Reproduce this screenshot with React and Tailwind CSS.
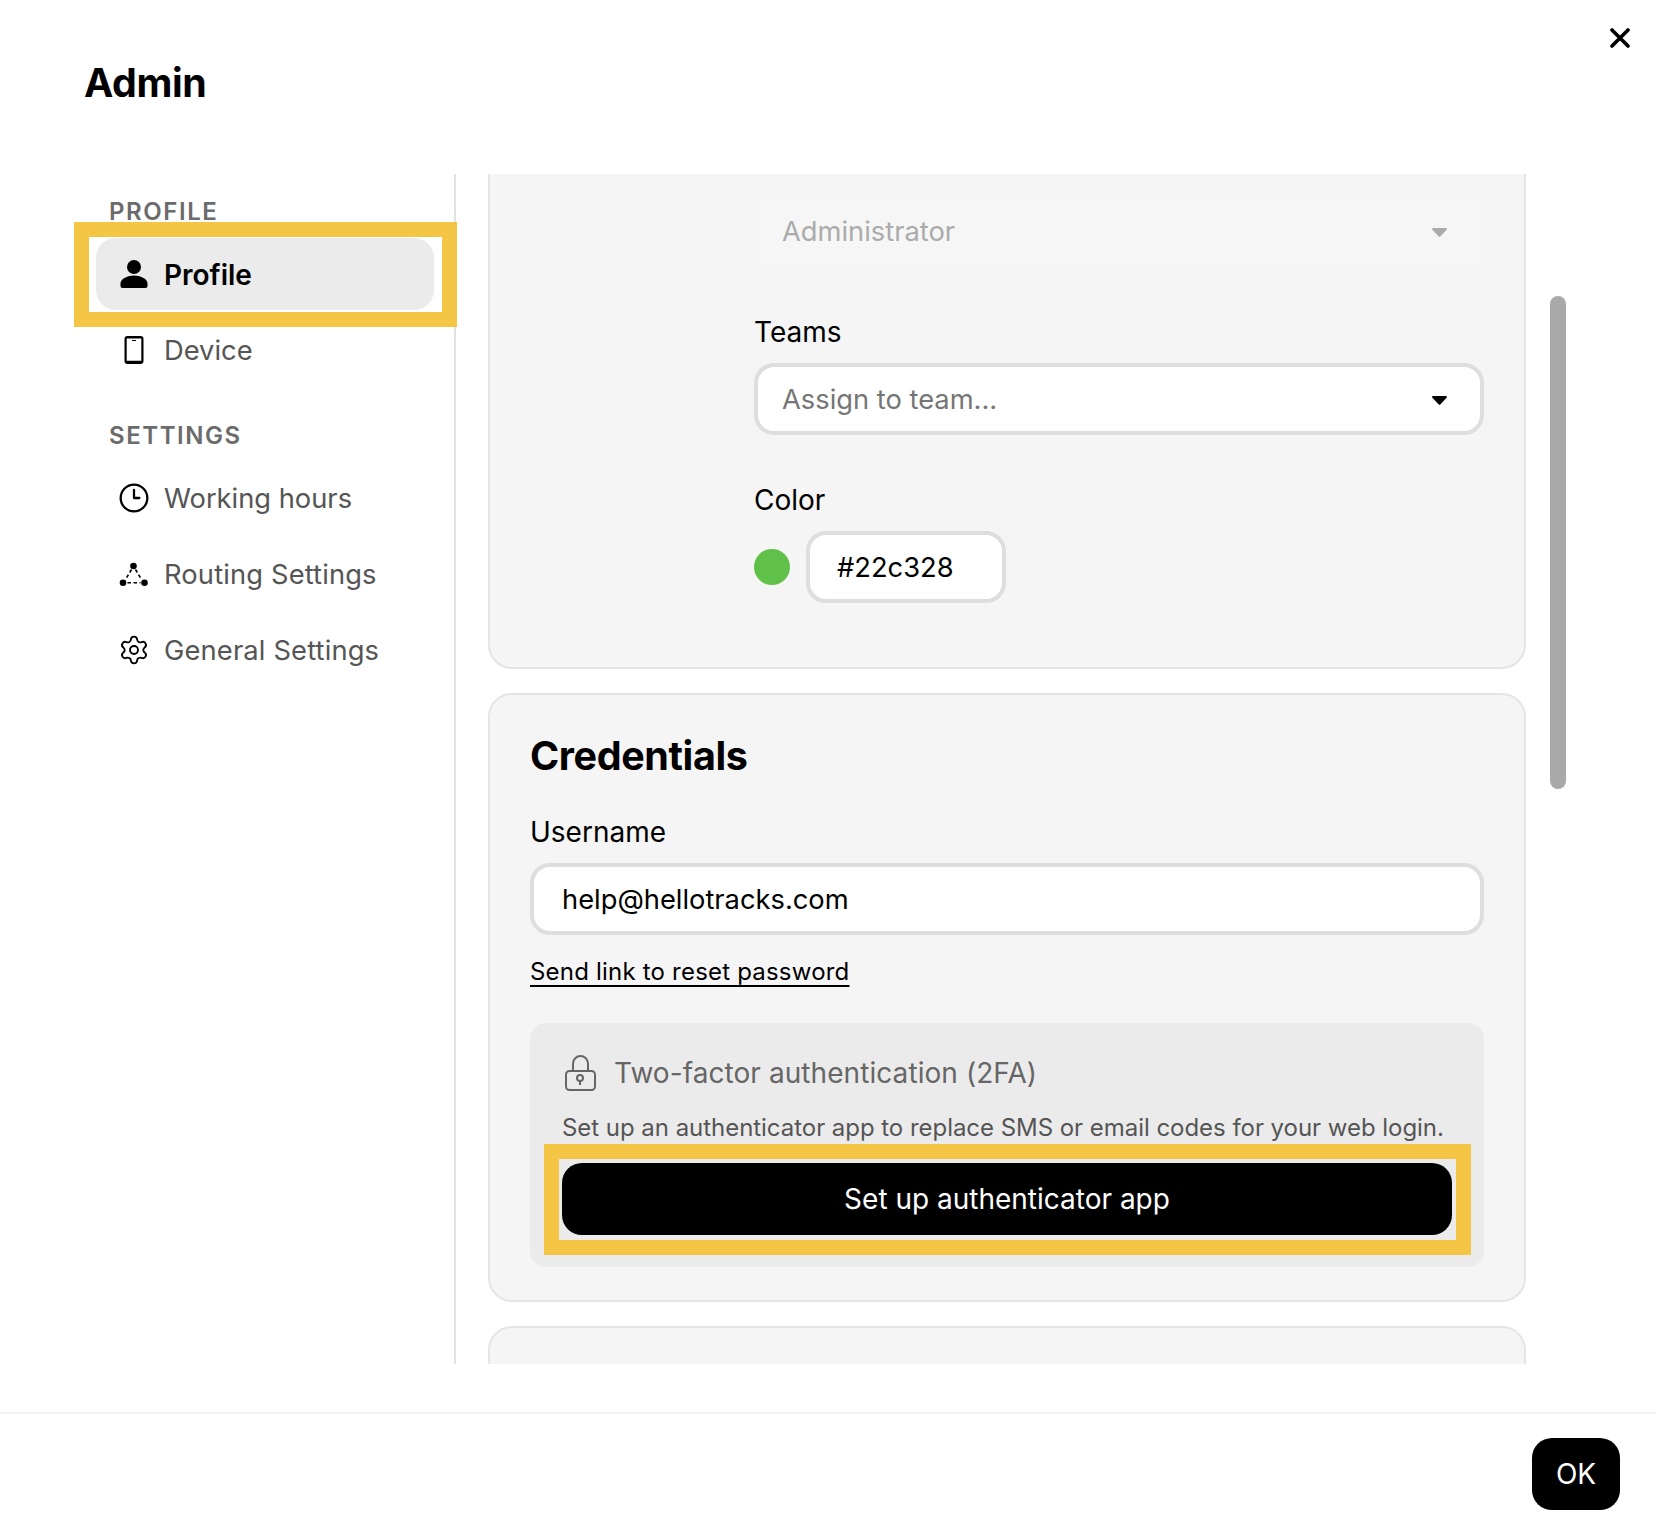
import { Clock3, Settings } from "lucide-react";

const font = { fontFamily: "Inter, 'Noto Sans', sans-serif" };

const PersonIcon = () => (
	<svg width="32" height="32" viewBox="0 0 32 32" fill="currentColor">
		<circle cx="16" cy="9" r="7" />
		<path d="M2.500 25.500c0-5 7.500-8 13.500-8s13.500 3 13.500 8v2.500c0 1.200-.8 2-2 2h-23c-1.200 0-2-.8-2-2z" />
	</svg>
);

const DeviceIcon = () => (
	<svg width="32" height="32" viewBox="0 0 32 32" fill="currentColor">
		<path
			fillRule="evenodd"
			d="M9.500 2h13a3 3 0 0 1 3 3v22a3 3 0 0 1-3 3h-13a3 3 0 0 1-3-3V5a3 3 0 0 1 3-3zM8.700 4.500v22.300h14.600V4.500z"
		/>
		<rect x="14" y="6" width="4" height="1" />
	</svg>
);

const RoutingIcon = () => (
	<svg width="32" height="32" viewBox="0 0 32 32" fill="currentColor">
		<circle cx="15.500" cy="8" r="3.300" />
		<circle cx="5" cy="24.700" r="3.300" />
		<circle cx="26.500" cy="24.700" r="3.300" />
		<path d="M13.500 11.500l-6 10M17.500 11.500l6 10M9.500 24.700h13" stroke="currentColor" strokeWidth="1.600" strokeDasharray="3.500 2.500" fill="none" />
	</svg>
);

const LockIcon = () => (
	<svg width="32" height="36" viewBox="0 0 32 36" fill="none" stroke="#666" strokeWidth="2">
		<path d="M9 16V8.500a7.500 7.500 0 0 1 15 0V16" />
		<rect x="2" y="16" width="29" height="19" rx="3.500" />
		<circle cx="16" cy="23" r="3" />
		<path d="M16 26v4" />
	</svg>
);

const Caret = ({ color }) => (
	<svg width="15" height="9" viewBox="0 0 15 9" fill={color}>
		<path d="M1.200 0h12.600c1 0 1.500 1.100.8 1.800L8.300 8.400c-.4.400-1.200.4-1.600 0L.4 1.800C-.3 1.100.2 0 1.200 0z" />
	</svg>
);

const NavItem = ({ icon, label, active, wide }) => (
	<div
		className={`flex h-[72px] w-[338px] items-center gap-[14px] rounded-[20px] pl-[22px] ${
			active ? "bg-[#ebebeb] text-[28px] font-semibold text-black" : "text-[27.3px] text-[#555555]"
		} ${wide ? "tracking-[0.15px]" : ""}`}
	>
		<span className="flex w-8 justify-center text-black">{icon}</span>
		<span className="pt-[2px]">{label}</span>
	</div>
);

const SectionLabel = ({ children }) => (
	<p className="mb-3 pt-px text-[24px] leading-[29px] font-semibold tracking-[0.065em] text-[#6b6b6b]">{children}</p>
);

const Highlight = ({ className }) => (
	<div className={`pointer-events-none absolute z-10 border-[15px] border-[#f5c645] ${className}`} />
);

const fieldClass = "flex h-[72px] items-center rounded-[20px] border-4 border-[#dedede] bg-white pt-[2px] text-[27.3px]";
const labelClass = "block text-[28px] leading-[34px] font-normal";

export default function App() {
	return (
		<div className="flex h-[1524px] w-[1656px] flex-col overflow-hidden bg-white text-black" style={font}>
			<header className="flex h-[174px] shrink-0 items-start justify-between pt-[59px] pl-[84px] pr-[26px]">
				<h1 className="text-[39.3px] leading-[48px] font-[650] tracking-[-0.01em]">Admin</h1>
				<button type="button" className="-mt-[31px] text-black">
					<svg width="20" height="20" viewBox="0 0 20 20" stroke="currentColor" strokeWidth="3.600" strokeLinecap="round">
						<path d="M2 2l16 16M18 2L2 18" />
					</svg>
				</button>
			</header>

			<div className="flex h-[1190px] shrink-0">
				<aside className="w-[456px] shrink-0 border-r-2 border-[#e2e2e2] pt-[22px] pl-[96px] pr-5 leading-none">
					<div className="pl-[13px]">
						<SectionLabel>PROFILE</SectionLabel>
					</div>
					<div className="relative">
						<NavItem icon={<PersonIcon />} label="Profile" active />
						<Highlight className="-top-4 -right-[23px] -bottom-[17px] -left-[22px]" />
					</div>
					<div className="mt-1">
						<NavItem icon={<DeviceIcon />} label="Device" />
					</div>
					<div className="mt-[34px] pl-[13px]">
						<SectionLabel>SETTINGS</SectionLabel>
					</div>
					<div className="flex flex-col gap-1">
						<NavItem icon={<Clock3 size={32} strokeWidth={1.7} />} label="Working hours" />
						<NavItem icon={<RoutingIcon />} label="Routing Settings" wide />
						<NavItem icon={<Settings size={32} strokeWidth={1.4} />} label="General Settings" wide />
					</div>
				</aside>

				<main className="w-[1070px] shrink-0 overflow-hidden pl-8">
					<section className="-mt-10 rounded-3xl border-2 border-[#e5e5e5] bg-[#f5f5f5] pt-[61px] pr-10 pb-16 pl-[264px]">
						<div className="flex h-[72px] items-center justify-between rounded-[20px] bg-[#f6f6f6] pr-[37px] pb-[2px] pl-7 text-[27.3px] text-[#ababab]">
							Administrator
							<Caret color="#ababab" />
						</div>
						<label className={`${labelClass} mt-[46px] mb-[14px]`}>Teams</label>
						<div className={`${fieldClass} justify-between pr-[33px] pl-6 text-[#767676]`}>
							Assign to team...
							<Caret color="#000000" />
						</div>
						<label className={`${labelClass} mt-12 mb-[14px]`}>Color</label>
						<div className="flex items-center gap-4">
							<span className="h-9 w-9 rounded-full bg-[#5fc14a]" />
							<div className={`${fieldClass} w-[200px] pl-[27px]`}>#22c328</div>
						</div>
					</section>

					<section className="mt-6 rounded-3xl border-2 border-[#e5e5e5] bg-[#f5f5f5] px-10 pt-[37px] pb-[33px]">
						<h2 className="text-[39.5px] leading-[48px] font-[650] tracking-[-0.01em]">Credentials</h2>
						<label className={`${labelClass} mt-[35px] mb-[14px]`}>Username</label>
						<div className={`${fieldClass} pl-7`}>help@hellotracks.com</div>
						<a className="mt-[22px] block w-fit text-[24px] leading-[30px] font-normal tracking-[0.2px] underline decoration-2 underline-offset-[5px] [text-decoration-skip-ink:none]">
							Send link to reset password
						</a>
						<div className="mt-9 rounded-2xl bg-[#ebebeb] px-8 pt-[33px] pb-8">
							<div className="flex h-[34px] items-center gap-[18px] pl-[2px] text-[28px] tracking-[0.07px] text-[#666666]">
								<LockIcon />
								Two-factor authentication (2FA)
							</div>
							<p className="mt-[23px] text-[24px] leading-[30px] tracking-[-0.04px] text-[#555555]">
								Set up an authenticator app to replace SMS or email codes for your web login.
							</p>
							<div className="relative mt-5">
								<button type="button" className="h-[72px] w-full rounded-[20px] bg-black text-[28px] text-white">
									Set up authenticator app
								</button>
								<Highlight className="-top-[19px] -right-[19px] -bottom-5 -left-[18px]" />
							</div>
						</div>
					</section>

					<section className="mt-6 h-24 rounded-3xl border-2 border-[#e5e5e5] bg-[#f5f5f5]" />
				</main>

				<div className="ml-6 w-4">
					<div className="mt-[122px] h-[493px] rounded-lg bg-[#a9a9a9]" />
				</div>
			</div>

			<footer className="mt-12 flex flex-1 justify-end border-t-2 border-[#f1f1f1] pt-6 pr-9">
				<button type="button" className="h-[72px] w-[88px] rounded-[20px] bg-black text-[28px] text-white">
					OK
				</button>
			</footer>
		</div>
	);
}
